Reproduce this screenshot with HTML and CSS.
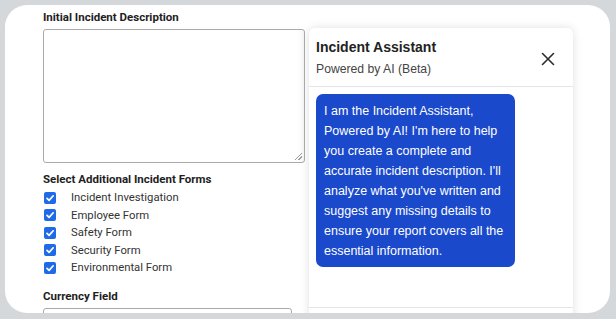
FILE: index.html
```html
<!DOCTYPE html>
<html>
<head>
<meta charset="utf-8">
<link rel="stylesheet" href="styles.css">
</head>
<body>
<div class="frame">
  <div class="form">
    <div class="label">Initial Incident Description</div>
    <div class="textarea"><span class="grip"></span></div>
    <div class="label section">Select Additional Incident Forms</div>
    <ul class="checks">
      <li><span class="box"><svg viewBox="0 0 12 12" width="12" height="12"><path d="M3 6.3 L5.1 8.4 L9.2 3.8" fill="none" stroke="#fff" stroke-width="1.7" stroke-linecap="round" stroke-linejoin="round"/></svg></span>Incident Investigation</li>
      <li><span class="box"><svg viewBox="0 0 12 12" width="12" height="12"><path d="M3 6.3 L5.1 8.4 L9.2 3.8" fill="none" stroke="#fff" stroke-width="1.7" stroke-linecap="round" stroke-linejoin="round"/></svg></span>Employee Form</li>
      <li><span class="box"><svg viewBox="0 0 12 12" width="12" height="12"><path d="M3 6.3 L5.1 8.4 L9.2 3.8" fill="none" stroke="#fff" stroke-width="1.7" stroke-linecap="round" stroke-linejoin="round"/></svg></span>Safety Form</li>
      <li><span class="box"><svg viewBox="0 0 12 12" width="12" height="12"><path d="M3 6.3 L5.1 8.4 L9.2 3.8" fill="none" stroke="#fff" stroke-width="1.7" stroke-linecap="round" stroke-linejoin="round"/></svg></span>Security Form</li>
      <li><span class="box"><svg viewBox="0 0 12 12" width="12" height="12"><path d="M3 6.3 L5.1 8.4 L9.2 3.8" fill="none" stroke="#fff" stroke-width="1.7" stroke-linecap="round" stroke-linejoin="round"/></svg></span>Environmental Form</li>
    </ul>
    <div class="label currency">Currency Field</div>
    <div class="input"></div>
  </div>
  <div class="panel">
    <div class="panel-head">
      <div class="titles">
        <div class="title">Incident Assistant</div>
        <div class="subtitle">Powered by AI (Beta)</div>
      </div>
      <svg class="close" viewBox="0 0 14 14" width="14" height="14"><path d="M1.5 1.5 L12.5 12.5 M12.5 1.5 L1.5 12.5" stroke="#2b2b2b" stroke-width="1.6" stroke-linecap="round"/></svg>
    </div>
    <div class="messages">
      <div class="bubble">I am the Incident Assistant, Powered by AI! I'm here to help you create a complete and accurate incident description. I'll analyze what you've written and suggest any missing details to ensure your report covers all the essential information.</div>
    </div>
    <div class="panel-foot"></div>
  </div>
</div>
</body>
</html>
```
FILE: styles.css
```css
html, body {
  margin: 0;
  padding: 0;
  background: #d5d8da;
  height: 319px;
  overflow: hidden;
}
.frame {
  margin: 5px 6px 0 5px;
  height: 308px;
  background: #fff;
  border-radius: 22px;
  overflow: hidden;
  display: flex;
  gap: 4px;
  padding-left: 38px;
  box-sizing: border-box;
}
.form {
  width: 262px;
  flex: none;
  padding-top: 4px;
  font-family: Roboto, "Liberation Sans", sans-serif;
}
.label {
  font-size: 11.5px;
  font-weight: 700;
  line-height: 16px;
  color: #1e1e1e;
}
.textarea {
  margin-top: 4px;
  height: 134px;
  border: 1px solid #a9a9a9;
  border-radius: 3px;
  box-sizing: border-box;
  position: relative;
  box-shadow: inset -8px 0 8px -8px rgba(0,0,0,0.08);
}
.grip {
  position: absolute;
  right: 2px;
  bottom: 2px;
  width: 7px;
  height: 7px;
  background: linear-gradient(135deg, transparent 45%, #999 45%, #999 55%, transparent 55%, transparent 70%, #999 70%, #999 80%, transparent 80%);
}
.section {
  margin-top: 8px;
}
.checks {
  list-style: none;
  margin: 2px 0 0;
  padding: 0;
}
.checks li {
  height: 17.5px;
  display: flex;
  align-items: center;
  font-size: 11.3px;
  color: #333;
}
.box {
  width: 12px;
  height: 12px;
  margin-left: 1px;
  margin-right: 15px;
  background: #1f6ae6;
  border-radius: 2px;
  display: flex;
}
.currency {
  margin-top: 11px;
}
.input {
  margin-top: 4px;
  width: 249px;
  height: 30px;
  border: 1px solid #a9a9a9;
  border-radius: 3px;
  box-sizing: border-box;
}
.panel {
  margin-top: 23px;
  width: 264px;
  flex: none;
  height: 300px;
  background: #fff;
  border-radius: 6px 6px 0 0;
  box-shadow: 0 0 10px rgba(0,0,0,0.13);
  display: flex;
  flex-direction: column;
  font-family: "Liberation Sans", Arial, sans-serif;
}
.panel-head {
  display: flex;
  align-items: center;
  justify-content: space-between;
  padding: 9px 18px 8px 7px;
  border-bottom: 1px solid #e3e5e8;
}
.title {
  font-size: 14px;
  font-weight: 700;
  line-height: 20px;
  color: #222;
}
.subtitle {
  margin-top: 3px;
  font-size: 12.2px;
  line-height: 18px;
  color: #444;
}
.close {
  display: block;
  margin-top: 3px;
}
.messages {
  height: 220px;
  padding: 7px 7px 0;
  box-sizing: border-box;
}
.bubble {
  width: 199px;
  box-sizing: border-box;
  background: #1a49cc;
  color: #fff;
  border-radius: 7px;
  padding: 7px 8px 6px;
  font-size: 12.5px;
  line-height: 20px;
}
.panel-foot {
  border-top: 1px solid #e3e5e8;
  flex: 1;
}
```
